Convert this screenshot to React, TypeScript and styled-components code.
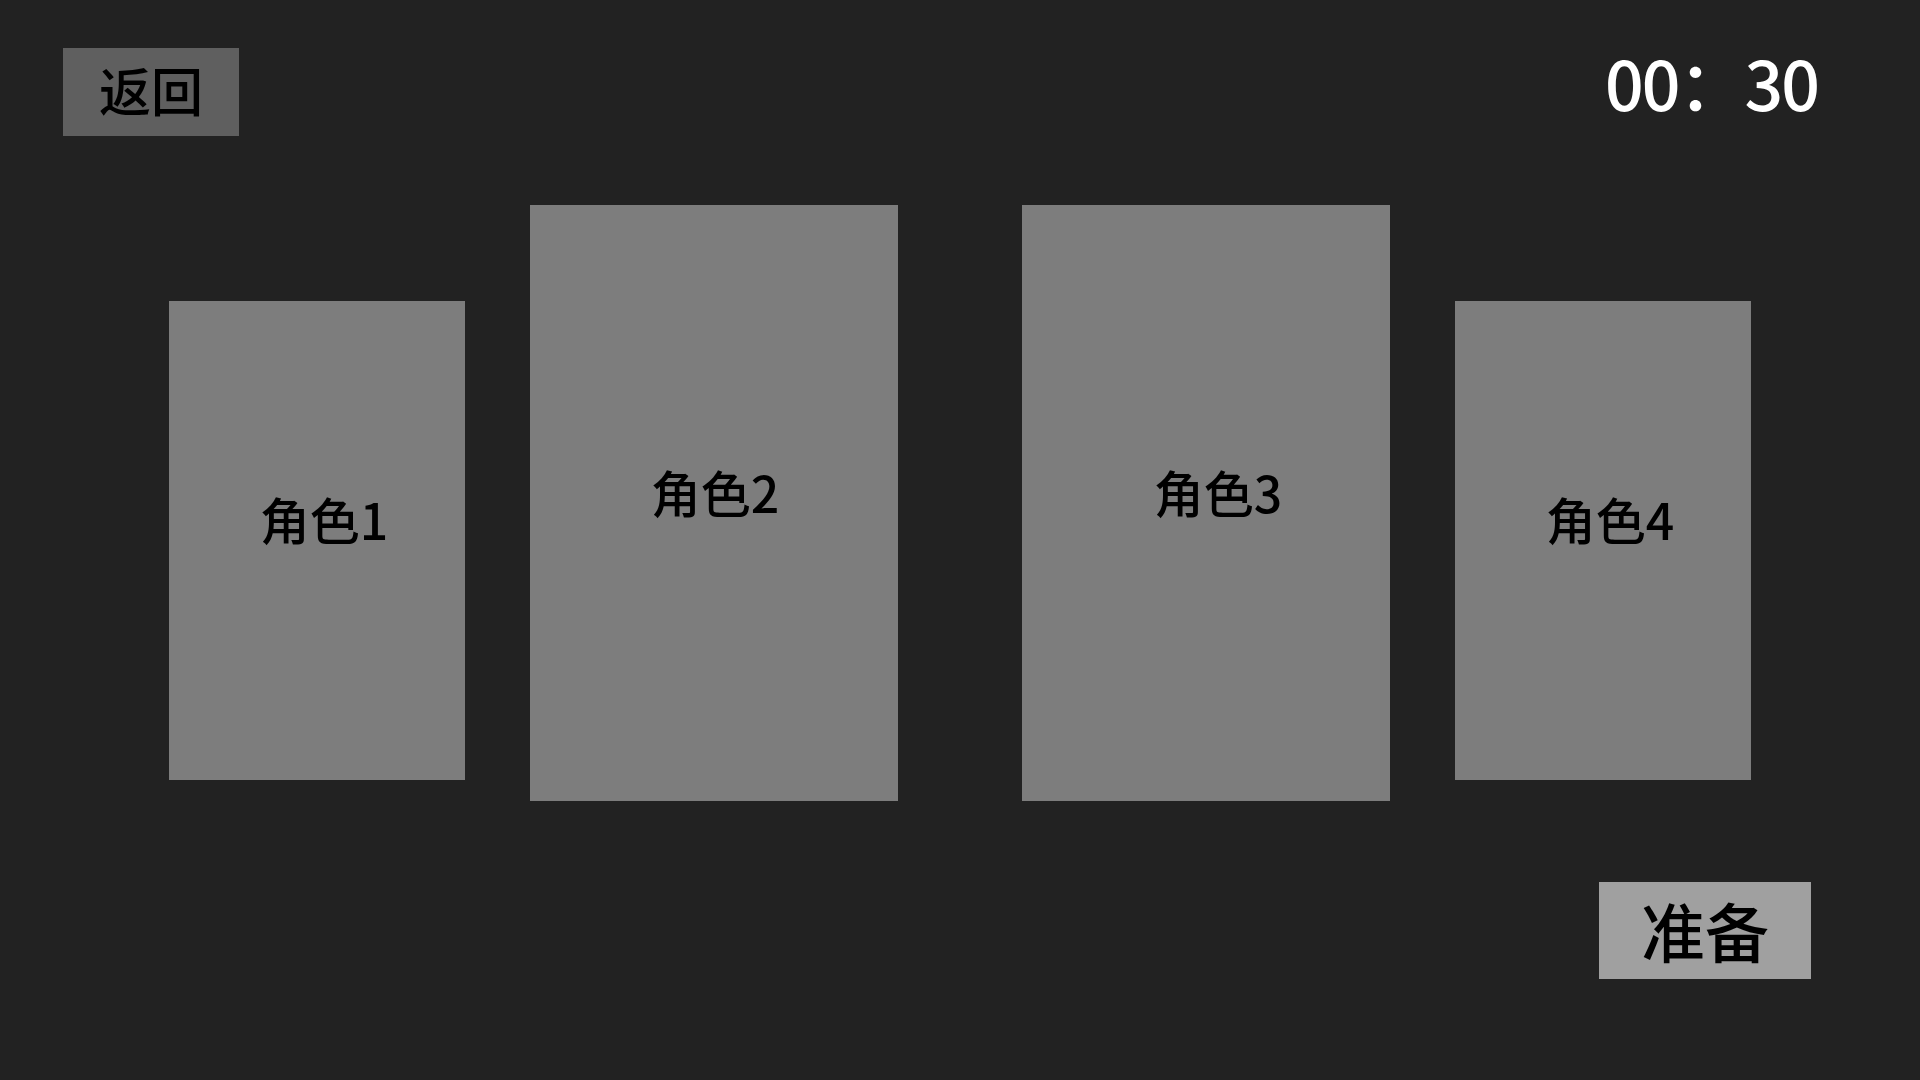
import React from 'react';
import styled, { createGlobalStyle } from 'styled-components';

const GlobalStyle = createGlobalStyle`
  html, body {
    margin: 0;
    padding: 0;
    background: #222222;
  }
  body {
    font-family: "Noto Sans CJK SC", "Noto Sans", sans-serif;
  }
`;

const Page = styled.div`
  width: 1920px;
  height: 1080px;
  display: flex;
  flex-direction: column;
  background: #222222;
  overflow: hidden;
`;

const Header = styled.header`
  display: flex;
  justify-content: space-between;
  align-items: flex-start;
  padding: 48px 102px 0 63px;
`;

const BackButton = styled.button`
  width: 176px;
  height: 88px;
  border: none;
  background: #5f5f5f;
  color: #000;
  font-family: inherit;
  font-size: 52px;
  font-weight: 500;
  line-height: 1;
  display: flex;
  align-items: center;
  justify-content: center;
  padding: 0 0 4px;
  cursor: pointer;
`;

const Timer = styled.div`
  color: #fff;
  font-size: 68px;
  font-weight: 500;
  letter-spacing: -2px;
  line-height: 1;
`;

const CardRow = styled.section`
  display: flex;
  justify-content: center;
  align-items: flex-start;
  margin-top: 69px;
`;

const Card = styled.div<{ $big?: boolean; $gap: number; $shift: number }>`
  width: ${(p) => (p.$big ? 368 : 296)}px;
  height: ${(p) => (p.$big ? 596 : 479)}px;
  margin-top: ${(p) => (p.$big ? 0 : 96)}px;
  margin-left: ${(p) => p.$gap}px;
  background: #7d7d7d;
  display: flex;
  align-items: center;
  justify-content: center;
  box-sizing: border-box;
  padding-bottom: ${(p) => (p.$big ? 24 : 46)}px;
  padding-left: ${(p) => p.$shift}px;
  color: #000;
  font-size: 50px;
  font-weight: 500;
  line-height: 1;
`;

const Footer = styled.footer`
  display: flex;
  justify-content: flex-end;
  padding: 81px 109px 0 0;
`;

const ReadyButton = styled.button`
  width: 212px;
  height: 97px;
  border: none;
  background: #a0a0a0;
  color: #000;
  font-family: inherit;
  font-size: 64px;
  font-weight: 500;
  line-height: 1;
  display: flex;
  align-items: center;
  justify-content: center;
  padding: 0 0 4px;
  cursor: pointer;
`;

const roles = [
  { name: '角色1', big: false, gap: 0, shift: 14 },
  { name: '角色2', big: true, gap: 65, shift: 2 },
  { name: '角色3', big: true, gap: 124, shift: 24 },
  { name: '角色4', big: false, gap: 65, shift: 14 },
];

const App: React.FC = () => {
  return (
    <>
      <GlobalStyle />
      <Page>
        <Header>
          <BackButton>返回</BackButton>
          <Timer>00：30</Timer>
        </Header>
        <CardRow>
          {roles.map((r) => (
            <Card key={r.name} $big={r.big} $gap={r.gap} $shift={r.shift}>
              {r.name}
            </Card>
          ))}
        </CardRow>
        <Footer>
          <ReadyButton>准备</ReadyButton>
        </Footer>
      </Page>
    </>
  );
};

export default App;
